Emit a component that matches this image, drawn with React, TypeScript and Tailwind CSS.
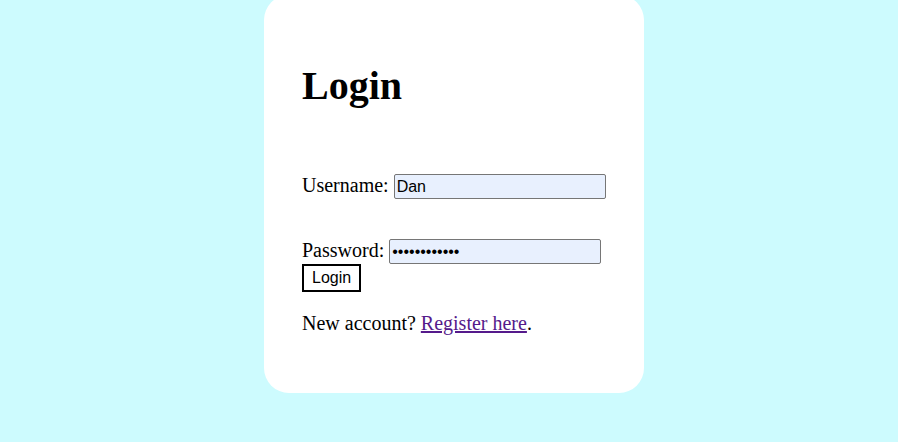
export default function App() {
  return (
    <div className="min-h-screen overflow-hidden bg-[#cdfbfe] flex justify-center pl-[10px] font-['Liberation_Serif',serif] text-black">
      <div className="mt-[-5px] w-[380px] h-[398px] bg-white rounded-[25px] pl-[38px] pt-[69px] flex flex-col items-start">
        <h1 className="text-[40px] leading-[44px] font-bold">Login</h1>
        <div className="mt-[66px] h-[25px] flex items-start gap-[5px]">
          <span className="text-[20px] leading-[23px]">Username:</span>
          <input
            type="text"
            defaultValue="Dan"
            className="w-[212px] h-[25px] border border-[#767676] rounded-[2px] bg-[#e8f0fe] px-[2px] text-[16px] font-['Liberation_Sans',Arial,sans-serif] text-black outline-none"
          />
        </div>
        <div className="mt-[40px] h-[25px] flex items-start gap-[5px]">
          <span className="text-[20px] leading-[23px]">Password:</span>
          <input
            type="password"
            defaultValue="abcdefghijkl"
            className="w-[212px] h-[25px] border border-[#767676] rounded-[2px] bg-[#e8f0fe] px-[2px] text-[16px] font-['Liberation_Sans',Arial,sans-serif] text-black outline-none"
          />
        </div>
        <button className="h-[28px] border-2 border-black bg-white px-[8px] text-[16px] leading-[18px] font-['Liberation_Sans',Arial,sans-serif] text-black">
          Login
        </button>
        <p className="mt-[20px] text-[20px] leading-[23px]">
          New account?{" "}
          <a href="#" className="text-[#551a8b] underline">
            Register here
          </a>
          .
        </p>
      </div>
    </div>
  );
}
